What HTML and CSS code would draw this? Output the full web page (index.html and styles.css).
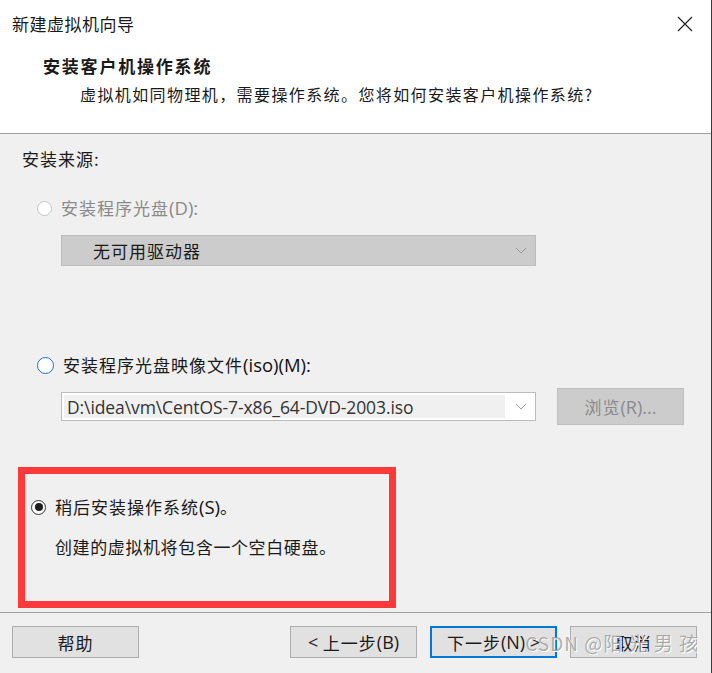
FILE: index.html
```html
<!DOCTYPE html>
<html lang="zh-CN">
<head>
<meta charset="UTF-8" />
<title>新建虚拟机向导</title>
<link rel="stylesheet" href="styles.css">
</head>
<body>

<div class="wizard">
  <div class="header">
    <div class="title-row">
      <span class="title">新建虚拟机向导</span>
      <svg class="close" width="16" height="16" viewBox="0 0 16 16">
        <path d="M1 1 L15 15 M15 1 L1 15" stroke="#222" stroke-width="1.2" fill="none" />
      </svg>
    </div>
    <div class="heading">安装客户机操作系统</div>
    <div class="subtitle">虚拟机如同物理机，需要操作系统。您将如何安装客户机操作系统?</div>
  </div>

  <div class="content">
    <div class="group-label">安装来源:</div>

    <div class="option disabled">
      <span class="radio"></span>
      <span class="option-label">安装程序光盘<span class="lat">(D):</span></span>
    </div>
    <div class="combo combo-disabled">
      <span class="combo-text">无可用驱动器</span>
      <svg class="arrow" width="12" height="8" viewBox="0 0 12 8"><path d="M1 1 L6 6 L11 1" stroke="#9a9a9a" fill="none" /></svg>
    </div>

    <div class="option iso">
      <span class="radio radio-focus"></span>
      <span class="option-label">安装程序光盘映像文件<span class="lat">(iso)(M):</span></span>
    </div>
    <div class="iso-row">
      <div class="combo combo-iso">
        <span class="combo-field">D:\idea\vm\CentOS-7-x86_64-DVD-2003.iso</span>
        <svg class="arrow" width="12" height="8" viewBox="0 0 12 8"><path d="M1 1 L6 6 L11 1" stroke="#a0a0a0" fill="none" /></svg>
      </div>
      <div class="btn btn-disabled">浏览<span class="lat">(R)...</span></div>
    </div>

    <div class="highlight">
      <div class="option later">
        <span class="radio radio-checked"></span>
        <span class="option-label">稍后安装操作系统<span class="lat">(S)</span>。</span>
      </div>
      <div class="later-note">创建的虚拟机将包含一个空白硬盘。</div>
    </div>
  </div>

  <div class="footer">
    <div class="btn">帮助</div>
    <div class="nav">
      <div class="btn"><span class="lat">&lt;&nbsp;</span>上一步<span class="lat">(B)</span></div>
      <div class="btn btn-default">下一步<span class="lat">(N)&nbsp;&gt;</span></div>
      <div class="btn">取消</div>
    </div>
    <div class="watermark">CSDN @阳 光 男 孩</div>
  </div>
</div>

</body>
</html>
```

FILE: styles.css
```css
body {
  margin: 0;
  background: #f0f0f0;
  font-family: "Noto Sans CJK SC", "Noto Sans", sans-serif;
  color: #1a1a1a;
}

.wizard {
  width: 712px;
  height: 673px;
  display: flex;
  flex-direction: column;
  border-right: 1px solid #3a3a3a;
  box-sizing: border-box;
}

.lat {
  font-family: "Open Sans", "Noto Sans", sans-serif;
  letter-spacing: 0;
}

.header {
  background: #fff;
  height: 134px;
  border-bottom: 1px solid #a0a0a0;
  box-sizing: border-box;
}

.title-row {
  display: flex;
  justify-content: space-between;
  align-items: center;
  padding: 9px 18px 0 12px;
  height: 28px;
}

.title {
  font-size: 17px;
  letter-spacing: 0.5px;
}

.close {
  margin-top: 1px;
}

.heading {
  font-size: 17px;
  font-weight: 700;
  letter-spacing: 1.8px;
  margin: 17px 0 0 43px;
  line-height: 24px;
}

.subtitle {
  font-size: 16px;
  letter-spacing: 1.4px;
  margin: 4px 0 0 80px;
  line-height: 24px;
}

.content {
  padding: 13px 0 0 22px;
  height: 479px;
  border-bottom: 1px solid #a0a0a0;
  box-sizing: border-box;
}

.group-label {
  font-size: 17px;
  letter-spacing: 1px;
  line-height: 24px;
}

.option {
  display: flex;
  align-items: center;
  gap: 9px;
  margin-left: 15px;
  font-size: 17px;
  letter-spacing: 1px;
  line-height: 24px;
}

.option .lat {
  font-size: 18.5px;
  color: #111;
}

.option.disabled {
  margin-top: 25px;
  color: #8a8a8a;
}

.option.disabled .lat {
  color: #8a8a8a;
}

.radio {
  width: 15px;
  height: 15px;
  border: 1px solid #333;
  border-radius: 50%;
  background: #fff;
  box-sizing: border-box;
  display: flex;
  align-items: center;
  justify-content: center;
}

.disabled .radio {
  border-color: #c4c4c4;
}

.radio-focus {
  border: 1.5px solid #1a73c8;
  width: 17px;
  height: 17px;
}

.radio-checked::after {
  content: "";
  width: 8px;
  height: 8px;
  border-radius: 50%;
  background: #1e1e1e;
}

.combo {
  display: flex;
  align-items: center;
  justify-content: space-between;
  box-sizing: border-box;
  border: 1px solid #bcbcbc;
}

.combo-disabled {
  margin: 15px 0 0 39px;
  width: 475px;
  height: 31px;
  background: #cccccc;
  padding: 0 8px 0 31px;
  font-size: 17px;
  letter-spacing: 1px;
}

.option.iso {
  margin-top: 87px;
}

.iso-row {
  display: flex;
  align-items: center;
  gap: 21px;
  margin: 11px 0 0 39px;
}

.combo-iso {
  width: 475px;
  height: 29px;
  background: #fff;
  padding: 2px 8px 2px 2px;
}

.combo-field {
  background: #f0f0f0;
  flex: 0 0 441px;
  height: 100%;
  display: flex;
  align-items: center;
  padding-left: 3px;
  box-sizing: border-box;
  font-family: "Open Sans", "Noto Sans", sans-serif;
  font-size: 17.5px;
  letter-spacing: -0.1px;
  color: #333;
}

.btn {
  width: 127px;
  height: 32px;
  box-sizing: border-box;
  border: 1px solid #adadad;
  background: #e1e1e1;
  display: flex;
  align-items: center;
  justify-content: center;
  font-size: 17px;
  letter-spacing: 1px;
}

.btn .lat {
  font-size: 18px;
}

.btn-disabled {
  height: 37px;
  background: #cccccc;
  border-color: #bfbfbf;
  color: #8a8a8a;
}

.highlight {
  margin: 42px 0 0 -4px;
  width: 378px;
  height: 141px;
  border: 7px solid #fc3a3a;
  box-sizing: border-box;
  padding-top: 21px;
}

.option.later {
  margin-left: 6px;
}

.later-note {
  margin: 16px 0 0 30px;
  font-size: 17px;
  letter-spacing: 0.6px;
  line-height: 24px;
}

.footer {
  position: relative;
  display: flex;
  justify-content: space-between;
  padding: 13px 14px 0 12px;
}

.nav {
  display: flex;
  gap: 13px;
}

.btn-default {
  border: 2px solid #0078d7;
}

.watermark {
  position: absolute;
  right: 12px;
  top: 16px;
  font-size: 19px;
  letter-spacing: 1px;
  color: rgba(150, 150, 150, 0.75);
  text-shadow: 1px 1px 0 #fff;
  pointer-events: none;
}
```
